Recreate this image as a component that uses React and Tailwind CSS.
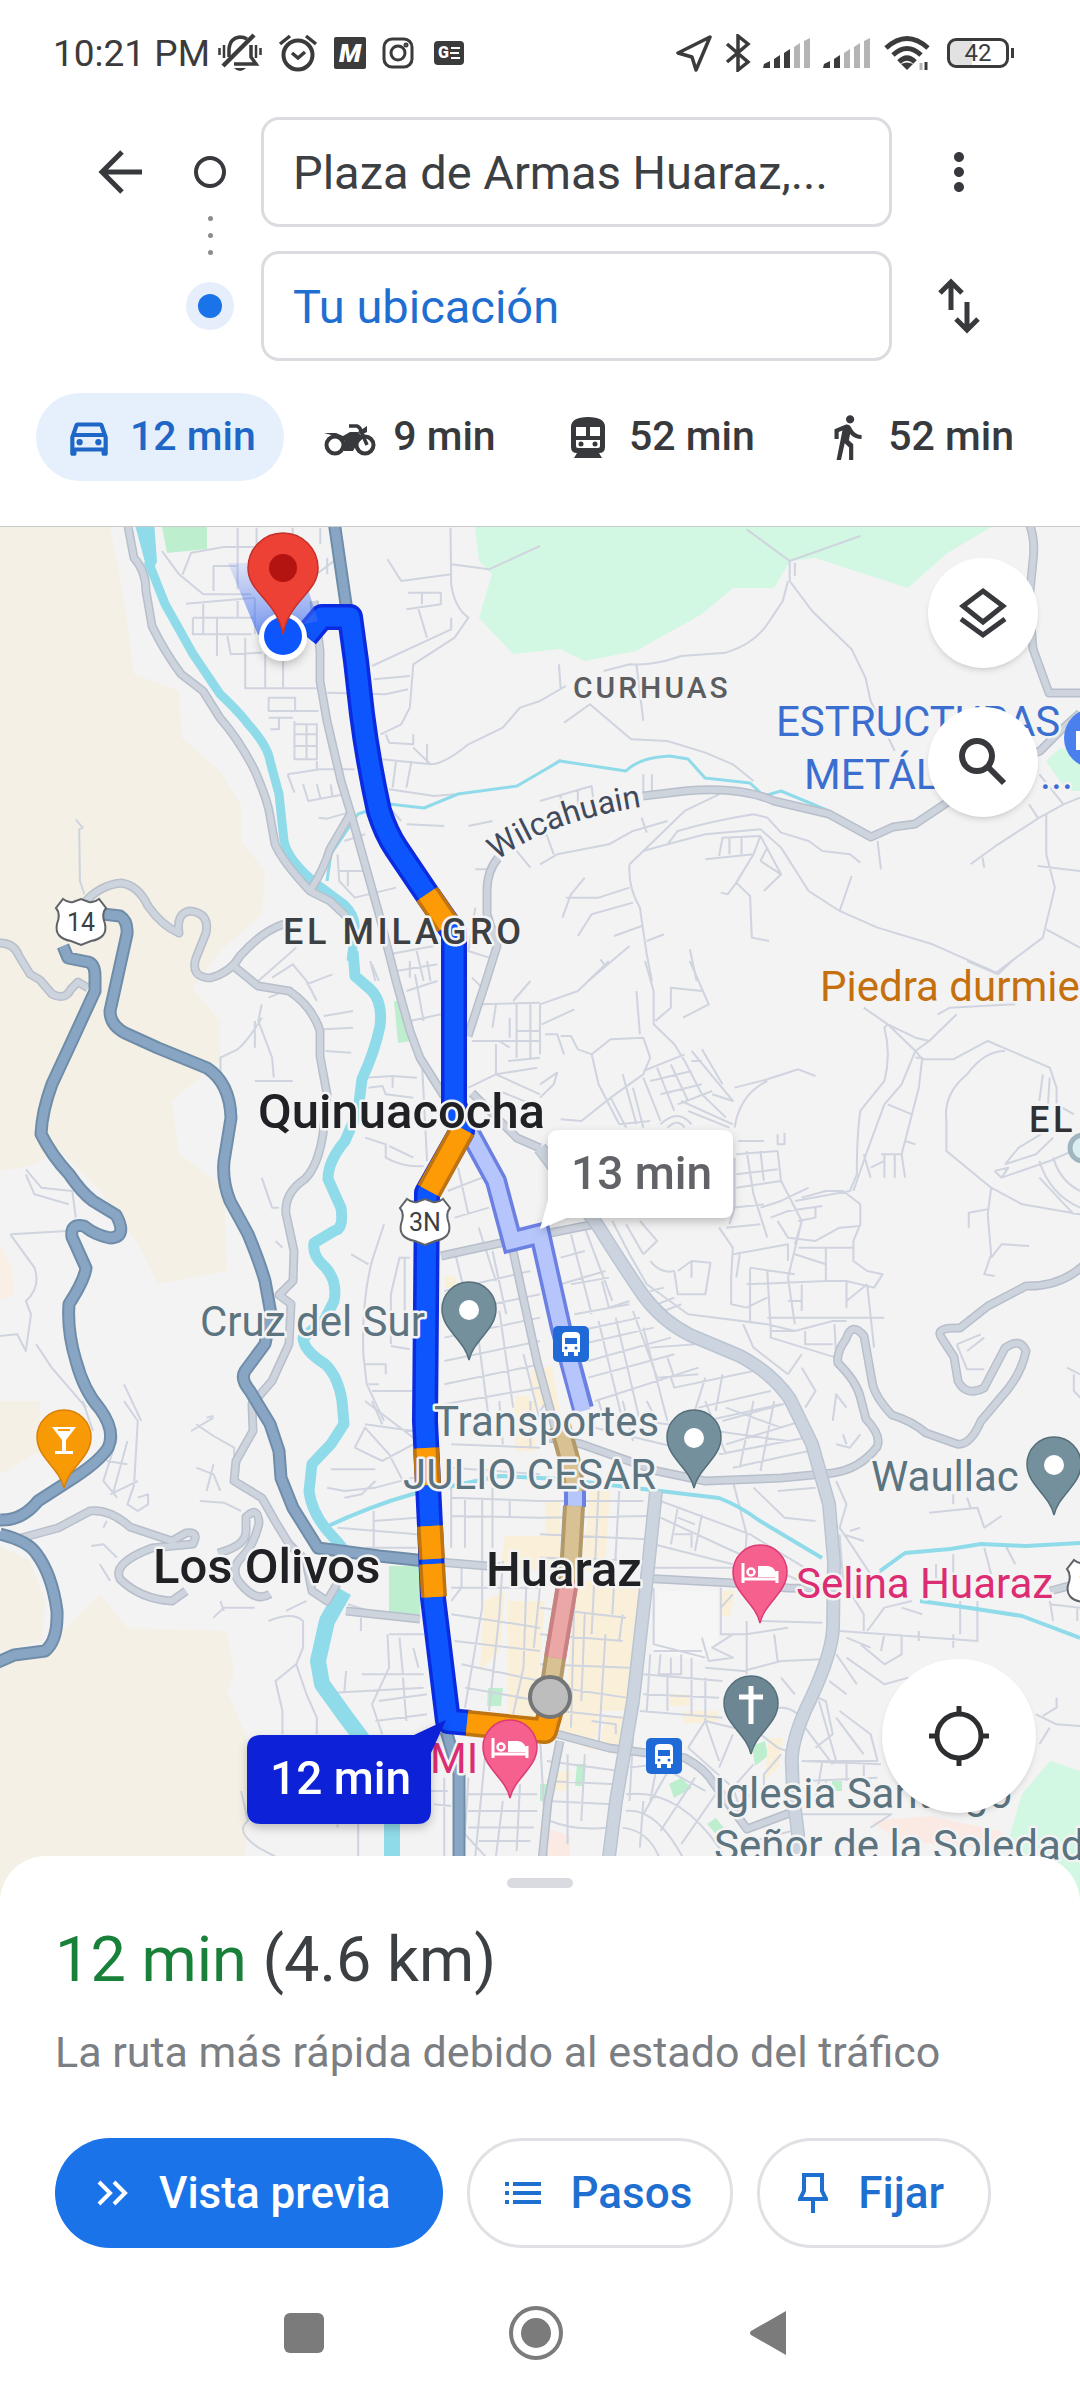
import { useState } from 'react';
import { MdOutlineDirectionsCar, MdDirectionsWalk, MdMoreVert } from 'react-icons/md';

const modes = [
  { id: 'car', time: '12 min' },
  { id: 'moto', time: '9 min' },
  { id: 'transit', time: '52 min' },
  { id: 'walk', time: '52 min' },
];

// Map labels, x/y is the start of the baseline
const labels = [
  { text: 'CURHUAS', x: 573, y: 697, cls: 'text-[30px] font-medium tracking-widest fill-[#5b5d60]' },
  { text: 'EL MILAGRO', x: 283, y: 943, cls: 'text-[36px] font-medium tracking-widest fill-[#3c4043]' },
  { text: 'EL', x: 1029, y: 1131, cls: 'text-[36px] font-medium tracking-widest fill-[#303134]' },
  { text: 'Quinuacocha', x: 258, y: 1127, cls: 'text-[49px] font-medium fill-[#202124]' },
  { text: 'Los Olivos', x: 153, y: 1582, cls: 'text-[49px] font-medium fill-[#202124]' },
  { text: 'Huaraz', x: 486, y: 1585, cls: 'text-[49px] font-medium fill-[#202124]' },
  { text: 'Cruz del Sur', x: 200, y: 1335, cls: 'text-[42px] fill-[#5b747f]' },
  { text: 'Transportes', x: 434, y: 1435, cls: 'text-[42px] fill-[#5b747f]' },
  { text: 'JULIO CESAR', x: 403, y: 1488, cls: 'text-[42px] fill-[#5b747f]' },
  { text: 'Waullac', x: 871, y: 1490, cls: 'text-[42px] fill-[#5b747f]' },
  { text: 'Iglesia Santiago', x: 714, y: 1807, cls: 'text-[42px] fill-[#5b747f]' },
  { text: 'Señor de la Soledad', x: 714, y: 1859, cls: 'text-[42px] fill-[#5b747f]' },
  { text: 'Selina Huaraz', x: 796, y: 1597, cls: 'text-[42px] fill-[#dc2d73]' },
  { text: 'MI', x: 430, y: 1772, cls: 'text-[42px] fill-[#dc2d73]' },
  { text: 'Piedra durmiente', x: 820, y: 1000, cls: 'text-[42px] fill-[#c4700f]' },
  { text: 'ESTRUCTURAS', x: 776, y: 735, cls: 'text-[42px] fill-[#3a6fd0]' },
  { text: 'METÁLICAS ...', x: 804, y: 788, cls: 'text-[42px] fill-[#3a6fd0]' },
];

const highways = [
  'M63 945L68 957L88 961Q95 963 95 975V990L72 1040L52 1083Q42 1110 41 1133Q52 1155 69 1173Q82 1192 93 1200L116 1214Q128 1236 110 1237Q95 1234 84 1225Q70 1222 72 1236L86 1267Q84 1280 69 1303Q67 1330 76 1360Q84 1390 100 1408Q116 1430 108 1447Q98 1462 69 1480L38 1500Q22 1520 0 1519',
  'M103 913L120 915Q128 920 127 933L110 1010Q110 1024 125 1032L158 1047L207 1067Q230 1082 231 1117L224 1160Q222 1180 230 1200L248 1233Q260 1262 265 1280L271 1313L265 1343L245 1370Q240 1378 250 1390L270 1423L279 1450L281 1477L293 1507L318 1547L379 1555L426 1560',
  'M0 1533Q28 1540 36 1552Q52 1573 57 1610Q58 1640 45 1650L14 1654L-4 1662',
  'M446 1730L459 1773V1880',
  'M334 520L347 610',
];

const mediumRoads = [
  'M127 520L134 557Q146 570 146 590L152 625Q164 650 181 673L203 690L220 717Q240 740 255 770Q268 800 270 815L275 843Q282 860 310 890L330 900L346 915',
  'M310 890Q324 868 330 848L351 812',
  'M314 600L320 650V680L327 720L341 780L351 813L365 863L379 913L396 980L410 1030L420 1057L444 1095',
  'M472 1092L517 1137L540 1147',
  'M498 857Q487 870 487 890V913L497 945L486 980L468 1035',
  'M643 795L685 790Q740 785 774 800L829 813L871 836L893 826L915 823L945 803L990 770L1040 750L1060 730L1080 712',
  'M1027 518Q1036 535 1033 560L1029 600L1033 648L1049 692H1082',
  'M84 902Q100 884 121 882Q138 884 148 905Q162 925 179 932Q176 912 190 910Q210 912 206 932L196 957Q190 976 210 977Q230 972 240 955Q262 930 284 923',
  'M231 963L258 985L289 990Q312 1005 320 1030L320 1055L327 1093L323 1133Q318 1165 305 1178Q284 1192 286 1213L294 1250L293 1280L279 1294L291 1303L289 1343L272 1380L252 1403L253 1430L236 1460L234 1480L262 1497L275 1520L289 1543L306 1560L312 1590L327 1600L337 1583',
  'M0 942Q14 942 19 955L30 973L40 979L52 993Q65 1000 71 988L78 981L88 987',
  'M21 1537L58 1527L90 1510Q110 1508 130 1526L172 1540L186 1532Q200 1530 193 1543L152 1547Q112 1562 120 1578Q140 1598 172 1600L186 1590',
  'M218 1552Q246 1545 246 1530V1516Q258 1504 259 1522Q254 1545 240 1558Q230 1570 240 1582Q256 1602 270 1593',
  'M1084 1264Q1060 1286 1026 1285L988 1305L960 1327Q935 1326 941 1336L954 1356L958 1380Q966 1396 984 1387L1005 1347Q1020 1336 1026 1350Q1022 1370 1008 1388L981 1420Q970 1445 957 1443L926 1432Q912 1420 892 1414Q874 1395 872 1380L864 1335Q852 1320 846 1338Q836 1352 838 1362Q856 1380 860 1395L866 1418Q882 1435 877 1446Q860 1468 833 1472L781 1477L705 1480L657 1470L581 1443L550 1437',
  'M557 1733L609 1747L685 1757Q705 1768 712 1780L747 1828L795 1810',
  'M441 1255L510 1240L600 1222',
  'M513 1250L537 1360L556 1430',
  'M426 1560L500 1566',
  'M640 1577L733 1582L788 1587L840 1588',
  'M1050 1590L1080 1582',
  'M540 1880L548 1800L560 1740',
  'M346 1610L420 1618',
];

const avenues = [
  'M540 1147L598 1225Q625 1268 643 1294Q662 1320 690 1334L740 1355Q772 1372 790 1398L812 1443L829 1503L834 1560L833 1627Q832 1655 805 1710Q790 1745 792 1765L793 1793L798 1833V1880',
  'M656 1490L647 1577L633 1700L616 1800L606 1880',
];

// Minor streets grouped by map tile, in tile units
const tiles = [
  {
    at: 'translate(0 520) scale(0.3444 0.3333)',
    d: 'M470 90L520 160L590 220H730M530 160L555 95L650 78H750M620 210V135H690M690 205V20M745 20V120M540 248L740 230M590 245V340M560 290H740M560 290V340H730M630 290V405M660 345L670 400L760 395M712 350V502H920M770 400V500M822 400V500M690 240V290M740 230V340M780 530H857V570H780ZM857 570H925M780 590H850M810 590V625H785M855 600V715H920V610H855M890 610V715M855 640H920M855 675H920M835 760L930 745H1030M835 760L855 815M880 790L895 840L1000 820M920 790L930 830M960 790L965 825M920 720V745M925 890L950 893L1010 875M1308 20L1310 190Q1320 260 1360 290L1320 350L1200 430L1190 560L1165 610L1105 640M1125 115L1165 180L1310 160M1080 435L1310 325V290M1215 265L1240 350M1185 215H1280V250L1180 265M1225 215V250M1310 130L1420 145L1568 75M1085 475L1190 465M950 515L1120 520L1185 505M1120 640L1130 665L1200 670V640M1200 680L1250 730Q1290 730 1360 670L1460 620L1510 560L1568 540M1110 715L1250 730M1140 800L1150 720M1180 800L1195 720M1240 670V730M1180 910L1290 915M1165 900L1130 860M1360 915L1430 900M1130 805L1260 825L1320 820M220 895L240 920L230 925L232 1080L245 1120M980 1000L985 1080L1030 1130L1150 1100M980 1050H1060M1000 960L1060 940M1010 1050V1095M1075 1320L1090 1380M1130 1300L1260 1275M1150 1350L1270 1330M1210 1290L1230 1380M1380 1045H1430M1380 1160L1360 1290L1420 1310M1500 990L1540 1040M750 1380L860 1280M850 20V40M930 70V20M950 110V160M905 170L970 120',
  },
  {
    at: 'translate(540 520) scale(0.3444 0.3333)',
    d: 'M600 25L725 120L930 45M725 120V180M740 125V165M720 180L705 240L660 310Q620 370 540 395L410 405Q330 435 260 430L185 450M725 180L790 270L905 385L945 470L960 540L1030 690M280 430L300 600M55 430L60 505M0 540L75 495M70 605L145 550L185 585L265 655L370 660L480 695L560 730L620 780M0 755L60 715M0 840L150 795L155 840M60 820V860M110 805V850M300 760V820M325 760V810M0 1030L50 1000L200 970L270 930L370 900M15 930L40 1000M295 890L310 935M300 990L420 870L520 820M260 1030L300 990L370 970L480 940L640 925L700 980L780 1110L870 1170L980 1220L1140 1270L1325 1355L1460 1250L1495 1100L1470 1000V880M370 970L400 930Q500 900 620 880L660 890L700 935L780 960L820 990L900 1000L930 1025M260 1030Q255 1100 290 1160L310 1300L325 1380M75 1130H170L260 1100M130 1070L90 1120L65 1190M110 1245L150 1180L270 1145M215 1245L295 1215M310 1260L360 1240M140 1380L260 1275M175 1315L190 1335M435 1285L455 1380M480 1015L620 1000M520 1005L530 950L640 945L700 1060M550 950V1000M585 950V1000M640 945L620 1000L570 1085L610 1125L615 1250L665 1260M570 1085L545 1120L525 1115M640 1020L700 1060L650 1110M660 980L640 1020M905 1065L870 1170M980 960L990 1045M1250 1030L1330 970L1450 890L1520 850L1568 830M1285 1010L1290 1040M1420 850L1445 890M1450 760L1520 850M1445 1035L1568 1050M1470 1225L1568 1280M0 950L20 940',
  },
  {
    at: 'translate(0 960) scale(0.3444 0.3333)',
    d: 'M760 170Q720 240 690 265L640 290V340M760 130L750 180L790 290L795 350M740 180V260M740 360H850M780 110L850 80M790 50L850 10L890 60L920 120M890 70L965 40M940 165L1025 150M940 205L1025 200M945 270L1020 275M75 625L120 680L210 690L220 770M75 640L100 700L200 730M30 820L195 810M30 820L100 920Q120 980 75 1020L90 1060L75 1170L50 1120L0 1125M105 1150L150 1220L250 1340M360 1270L410 1380M760 650L790 740L810 740M800 840L820 860M1020 880L1070 910M1115 790L1080 900Q1050 1020 1055 1180L1065 1270L1115 1380M1135 1150V1000L1160 890H1190M1175 890V1050M1055 1210H1120V1240M1070 1270H1100M1080 1290H1200M1135 1155L1190 1165M600 1370L620 1365M1060 350L1140 345L1210 350M1070 380L1110 375L1120 400L1200 410M1140 345V380M1060 530L1120 550L1120 590Q1170 620 1230 615M1130 555L1200 590M1225 300L1240 600M1080 10L1100 60M1190 50V0M1180 90L1270 60M1190 180L1280 160M1205 40L1230 180M1240 0L1250 60M1370 50L1400 80M1395 130L1568 125M1440 130L1430 200M1480 170V230M1490 120L1540 60M1500 130V290M1540 130V290M1370 240H1568M1450 240L1480 260M1440 250V340L1568 400M1360 380L1440 340L1560 320M1475 300L1568 290M1500 210H1568M1450 390L1568 440M1330 620L1360 760M1300 690L1400 650M1320 770L1420 740M1390 800L1440 960M1320 870L1360 1040M1430 870L1470 1060M1290 990L1540 930M1290 1060L1568 1000M1290 1130L1568 1070M1290 1200L1568 1140M1290 1270L1568 1210M1290 1330L1568 1280M1380 1060L1420 1380M1450 1050L1490 1340M1520 1180L1568 1380',
  },
  {
    at: 'translate(540 960) scale(0.3444 0.3333)',
    d: 'M0 130L110 90L200 0M0 130V280M5 190L100 145M15 220H50L70 280M60 225H90L110 265L150 280L205 235L300 230L320 290L300 340L205 410L120 480L60 475M150 280L170 370L230 490M0 370L50 335L40 370L0 410M280 90L290 220M305 0L330 90L330 190L390 250L420 300L470 400L540 470M435 0L490 130L415 170M335 180L380 140V80L470 90M205 410L250 500M240 340L280 490M270 380L300 500M300 330L420 280M300 350L350 480M340 320L390 450M380 310L430 420M320 360L440 330M350 400L470 370M400 430L500 390M440 270L560 420L500 400M470 265L530 370M440 300L470 300M410 420L560 490M430 450L550 500M230 490L320 480M350 490Q400 440 440 490M370 500Q400 470 420 500M565 380L660 355L750 325L800 345M565 500Q580 400 660 360M575 540H650M690 520V550H710V515M570 580L690 570M570 640L690 625M570 680L700 660M600 570L620 700L660 830M640 570L650 660M690 570L700 660L760 780M565 590V740L550 790M640 740L700 720L780 680M560 740L650 730M540 800L640 790M760 710L830 690H880L930 730V790L910 840V900L950 930L995 940L970 980L890 960L830 960L600 970M740 720L900 690L920 640Q920 520 930 450L1000 360Q1020 280 1000 200L1010 190L1090 270L1050 370L1000 430L950 570L910 690M670 770L720 750L820 735M690 780L720 830L800 840L870 800L930 795M750 780L800 770V740M520 800L560 860L555 950M580 880L570 950M560 880L720 850V900M720 950L760 780L740 850M750 860H910M610 920L740 940M610 920V1080M555 950V1030L600 1040M660 930L670 1110L740 1110M720 950L740 1090M760 970V1050M830 960V860M890 960V1040M720 1020H760M600 1040L660 1010M660 1070L1000 1070M950 970L970 1160M890 1020L950 970M740 880L830 910M430 1060L660 1090L740 1110L850 1080H890M590 1090L620 1160L720 1240M670 1110V1130L860 1190M770 1110V1150H850M855 1090L860 1190M720 1240L760 1180M760 1220L800 1290L770 1340M850 1380L860 1300L890 1340M320 900Q350 940 390 930M300 880L340 840L290 780M390 930L400 1000H480L495 905L440 900L400 930M440 900V950M210 780L260 880L310 970L430 1060M250 790L300 880M320 990L360 980M340 1030L390 1010M360 1050L410 1030M60 890L130 870M60 970L190 930M90 820L150 1060M130 800L210 1020M90 970L200 950M180 960L200 1040L260 1020M100 1060L260 1030M110 1110L290 1070M120 1150L330 1100M140 1200L380 1130M140 1250L390 1180M160 1320L460 1220M270 1050L340 1250L460 1240M170 1080L240 1380M220 1070L290 1380M300 1100L370 1380M320 1160L450 1150M380 1250L390 1280L620 1230M480 1250L440 1380M530 1240L510 1350M370 1190L390 1250M460 1340L670 1290M480 1380L700 1330M940 140L1010 190L1090 230L1130 240L1090 270L1110 295H1200L1300 240L1480 320L1500 380V430L1550 460M1130 240L1210 160M1155 160L1190 140L1380 130M1090 290H1110L1100 380L1080 460L1010 430M1080 460L1050 580M1060 540L1090 550M1350 270Q1290 270 1240 340Q1170 400 1180 480L1180 570L1310 680L1400 730L1568 760M940 580L960 650M1000 580V650M1030 580V650M990 580H1050L1060 650M960 620L1000 600M1310 680L1300 760L1310 880L1290 940L1320 945M1310 890L1340 850L1420 855M1245 800V755L1300 745M1350 610L1390 560L1470 510M1320 630L1360 620L1340 650L1320 630M1340 650L1480 600L1568 560M1350 610L1440 580L1490 530M1450 600Q1480 700 1568 740M1490 590Q1510 660 1568 690M1450 650L1550 760M1460 340L1450 420M1480 350L1475 430M1210 1150L1280 1120M1240 1170L1290 1130M1210 1150L1240 1225H1290M1530 1220L1568 1240M1550 1240V1290L1568 1310M1240 0L1330 40L1370 0',
  },
  {
    at: 'translate(0 1400) scale(0.3444 0.3333)',
    d: 'M555 90L620 50M570 70L620 105L680 140V170M570 200L620 220L640 270M600 270L620 190M580 300L650 305L700 330M240 0L270 90M360 0L400 60L390 240M300 240L340 110M330 270L370 120M310 180L370 190M320 280L400 240M300 240L340 290M390 250L370 310L400 330L430 310V280L400 290M265 435L300 430L340 470M290 490L320 540M310 360L300 380M620 650L650 620L740 620M640 600L650 630M830 630L890 600M780 660Q850 630 880 660L880 740L860 790L890 880L920 950V1000M860 790L800 840L820 930V1000M700 1170L720 1260Q680 1290 750 1340L800 1367M1040 1270V1367M980 1280V1270M1060 0L1200 110M1080 0L1110 70M1030 140L1060 80L1130 160L1170 240M1030 140L1110 180L1200 130M960 205H1090M950 260L1000 270L1090 260L1200 230M1060 70L1200 90M1000 290L1050 280L1090 240M1085 330V440M980 380L1210 400M1085 360L1210 350M1060 440L1210 440M1010 610L1100 640L1220 650M1048 650V690M1130 700H1230M1125 700L1130 800L1080 910L1110 1000M1160 710L1170 820M1200 740L1215 800M1050 820H1230M1005 810L1000 870M970 875L1230 860M1100 900L1240 880M1090 960L1240 940M1170 830L1180 960M1310 290L1568 300M1310 345L1568 350M1310 240V440M1350 290V440M1430 200V440M1400 290V620M1310 200L1568 220M1310 130L1568 140M1450 0L1460 130M1310 640L1568 680M1320 720L1568 750M1340 790L1568 840M1350 860L1568 900M1340 490V560L1310 600M1400 620L1350 920M1460 480L1450 640L1420 930M1530 500L1520 800L1490 940M1568 560L1550 740M1400 560H1568M1310 560H1400M1480 300V350M1540 0V140M1250 1170H1300M1260 1210L1310 1215M1290 1130V1367M1360 1130L1350 1300L1410 1367M1410 1050L1380 1367M1460 1200L1440 1367M1360 1180H1560M1360 1230H1560M1360 1280H1550M1510 1150L1500 1350M1390 1320H1540',
  },
  {
    at: 'translate(540 1400) scale(0.3444 0.3333)',
    d: 'M0 300H300M0 350L320 345M0 400L310 415M0 470L300 480M20 0L40 100M170 0L200 100M240 0L270 120M310 0L340 60M160 40L720 120M160 80L400 140M540 20L700 80M540 130L760 60M520 160L770 110M530 60L740 0M560 200L780 150M620 0L580 200M680 0L640 210M480 0L540 160M230 270L210 640M170 270L150 700M110 300L100 620M350 300L610 400L800 520M350 350L560 450L820 570M400 320L380 430M470 340L450 450M330 430L560 490M390 400H440V440M400 350L450 370M330 500H560M560 240L600 400L595 480M620 260L710 350L800 360M860 240L890 310L870 380L960 520M690 270L800 260M330 560V730L480 770M525 560V700H600L720 680M600 660V820M640 660L820 665M560 580L525 620M330 750H470M320 760L310 930M350 760L345 820H410V760M380 770V820M440 770V940M470 710L490 780L560 770L500 740L560 700M480 800L590 810L700 780L820 775M480 830V960M300 820L530 840M300 880L520 890M290 930L530 950M370 820V930M680 700L690 780M700 830L740 880M750 940Q700 900 660 940M780 1080H980L960 1000L870 930M800 1040L850 1000L830 900L780 880M840 840L890 880M860 760L920 850M890 770L1000 850L1070 830M890 710L960 740M930 730L1000 790L1050 760V700M870 690L1270 720V600M950 690L1000 620L1080 600M1100 720V690M1200 740V700M940 690V640L880 540L870 400M980 520L1030 480M880 400L940 420M900 390L930 380M1000 700L990 750M1050 620L1110 640M1130 335L1270 320L1290 380L1340 345M1200 280V310M1240 290L1250 320M1150 490V540M1200 460V530M1290 440L1310 520M1350 430L1380 490M1220 600V700M1480 600L1490 660M1560 620V660M860 130L900 140L930 100M880 100L890 130M0 620L250 650M0 700L240 720M100 580L90 980M190 700L170 1040M130 640L120 900M240 640L230 720M0 790L260 800M60 860L250 890M60 930L240 950M150 960L220 970V1000M0 1010L20 1380M20 1080L230 1110M20 1140L220 1150M20 1200L210 1210M30 1260Q100 1290 200 1280M80 1060V1330M130 1060L120 1260M270 1010L260 1200M260 1100L340 1090L480 1170M250 1180Q400 1160 520 1340L540 1380M250 1230Q340 1220 420 1380M240 1280Q320 1290 350 1380M300 1200L290 1340M340 1090L320 1200M400 1060L300 1240M450 1130L350 1290M510 1180L410 1330M520 1080L480 960L640 1000L690 1040L740 1060M430 1040L560 1160L590 1250M480 960L430 1040M560 1000L520 1100M620 1090L560 1160L640 1200M700 1060L650 1120V1200M760 1080L990 1090M770 1140L980 1130M820 1080L800 1200M890 1080V1140M940 1090V1140M760 1240L1020 1240L960 1280M830 1140L850 1200M770 980L850 1090M810 900L860 1080M860 950L940 1060M1440 940L1500 970L1568 975M1450 1030L1480 980M1500 890V920L1460 945M600 1290L730 1240M620 1320L730 1290M0 30L20 1M1480 610L1568 620M1490 560L1568 545',
  },
];

function Motorcycle() {
  return (
    <svg viewBox="0 0 54 42" className="h-[42px] w-[54px]" fill="none" stroke="currentColor" strokeWidth="4">
      <circle cx="12" cy="29" r="8.500" />
      <circle cx="42" cy="29" r="8.500" />
      <path d="M26 10H34Q37 11 38 15L44 29" strokeWidth="3.500" />
      <path d="M35 16L44 10V16L38 19Z" fill="currentColor" stroke="none" />
      <path d="M1 17H13L20 20L27 16H35L40 22L34 28L30 35H21L18 31L22 25L12 20Z" fill="currentColor" stroke="none" />
    </svg>
  );
}

function Train() {
  return (
    <svg viewBox="0 0 50 50" className="size-[50px]" fill="currentColor">
      <path
        fillRule="evenodd"
        d="M8 15Q8 5 25 5T42 15V35Q42 41 36 41L39 46H11L14 41Q8 41 8 35ZM13 15V24H23V15ZM27 15V24H37V15ZM13 28V34Q13 36 15 36H35Q37 36 37 34V28Z"
      />
      <circle cx="18" cy="32" r="2.500" />
      <circle cx="32" cy="32" r="2.500" />
    </svg>
  );
}

function ModeIcon({ id }) {
  if (id === 'car') return <MdOutlineDirectionsCar className="size-[50px]" />;
  if (id === 'moto') return <Motorcycle />;
  if (id === 'transit') return <Train />;
  return <MdDirectionsWalk className="size-[50px]" />;
}

function Signal({ strong }) {
  return (
    <svg viewBox="0 0 48 32" className="h-8 w-12" fill="#b4b4b4">
      <path d="M0 31L1 27L7 24V31Z" fill="#3b3b3b" />
      <path d="M11 31V22L17 18V31Z" fill="#3b3b3b" />
      <path d="M21 31V16L27 12V31Z" fill={strong ? '#3b3b3b' : '#b4b4b4'} />
      <path d="M31 31V10L37 6V31Z" />
      <path d="M41 31V4L47 1V31Z" />
    </svg>
  );
}

function StatusBar() {
  return (
    <div className="flex h-[106px] items-center justify-between pl-[53px] pr-[66px] text-[#3b3b3b]">
      <div className="flex items-center gap-4">
        <span className="text-[37px] leading-none">10:21 PM</span>
        <svg viewBox="0 0 44 40" className="-ml-2 h-10 w-11" fill="none" stroke="currentColor" strokeWidth="3.5">
          <path d="M11 24V16Q12 5 22 4Q26 4 29 6M33 12V24L38 31H16" />
          <path d="M5 33L36 2" strokeWidth="4.5" />
          <path d="M16 35H28Q22 41 16 35Z" fill="currentColor" stroke="none" />
          <path d="M1.500 15V22M6 12V25M38 12V25M42.500 15V22" strokeWidth="2.500" />
        </svg>
        <svg viewBox="0 0 40 40" className="size-10" fill="none" stroke="currentColor" strokeWidth="4">
          <circle cx="20" cy="22" r="14.500" />
          <path d="M2 11L12 3M38 11L28 3" strokeWidth="3.500" />
          <path d="M14 20L20 25L27 19" strokeWidth="3.500" />
        </svg>
        <span className="flex size-8 items-center justify-center rounded-xs bg-[#3b3b3b] text-[26px] leading-none font-black text-white italic">M</span>
        <svg viewBox="0 0 32 32" className="size-8" fill="none" stroke="currentColor" strokeWidth="3">
          <rect x="2" y="2" width="28" height="28" rx="8" />
          <circle cx="16" cy="16" r="7" />
          <circle cx="24" cy="8" r="1" />
        </svg>
        <span className="ml-1 flex h-6 w-[30px] items-center justify-center gap-px rounded-sm bg-[#3b3b3b] text-[16px] leading-none font-black text-white">
          G
          <svg viewBox="0 0 10 12" className="h-3 w-2.5" stroke="#fff" strokeWidth="2">
            <path d="M1 1H10M0 6H9M1 11H10" />
          </svg>
        </span>
      </div>
      <div className="flex items-center gap-3">
        <svg viewBox="0 0 38 38" className="size-[38px]" fill="none" stroke="currentColor" strokeWidth="3.5" strokeLinejoin="round">
          <path d="M35 3L3 19L17 23L21 36Z" />
        </svg>
        <svg viewBox="0 0 26 38" className="h-[38px] w-[26px]" fill="none" stroke="currentColor" strokeWidth="3.5">
          <path d="M2 10L23 28L13 36V2L23 10L2 28" />
        </svg>
        <Signal strong />
        <Signal />
        <svg viewBox="0 0 48 38" className="h-[38px] w-12" fill="none" stroke="currentColor" strokeWidth="5">
          <path d="M3 14Q24 -5 45 14" />
          <path d="M10 21Q24 8 38 21" />
          <path d="M16 28Q24 20 32 28" />
          <path d="M24 36L18 30Q24 27 30 30Z" fill="currentColor" stroke="none" />
          <path d="M38 29V36" stroke="#b4b4b4" strokeWidth="3" />
          <path d="M43 28V36" strokeWidth="3" />
        </svg>
        <div className="flex items-center gap-0.5 pl-1">
          <span className="flex h-[30px] w-[62px] items-center justify-center rounded-[9px] border-3 border-[#3b3b3b] bg-linear-to-r from-[#e2e2e2] from-40% to-white to-40% text-[24px] leading-none">
            42
          </span>
          <span className="h-2.5 w-[3px] bg-[#3b3b3b]" />
        </div>
      </div>
    </div>
  );
}

function SearchHeader() {
  return (
    <header className="flex gap-6 pt-[11px] pr-[78px] pl-[83px]">
      <button type="button" aria-label="Atrás" className="flex h-[110px] w-[76px] items-center justify-center">
        <svg viewBox="0 0 46 46" className="size-[46px]" fill="none" stroke="#37393c" strokeWidth="5">
          <path d="M44 23H5M24 3L4 23L24 43" />
        </svg>
      </button>
      <div className="flex w-[54px] flex-col items-center justify-between py-[31px]">
        <span className="mt-2 size-8 rounded-full border-4 border-[#37393c]" />
        <span className="flex flex-col gap-3">
          <span className="size-[5px] rounded-full bg-[#8a8d91]" />
          <span className="size-[5px] rounded-full bg-[#8a8d91]" />
          <span className="size-[5px] rounded-full bg-[#8a8d91]" />
        </span>
        <span className="flex size-12 items-center justify-center rounded-full bg-[#e6eefc]">
          <span className="size-6 rounded-full bg-[#1a73e8]" />
        </span>
      </div>
      <div className="flex min-w-0 flex-1 flex-col gap-6">
        <input
          type="text"
          aria-label="Origen"
          defaultValue="Plaza de Armas Huaraz,..."
          className="h-[110px] w-full rounded-[18px] border-3 border-[#dadce0] px-[29px] text-[47px] text-[#3c4043] outline-none"
        />
        <input
          type="text"
          aria-label="Destino"
          defaultValue="Tu ubicación"
          className="h-[110px] w-full rounded-[18px] border-3 border-[#dadce0] px-[29px] text-[47px] text-[#1f6fd0] outline-none"
        />
      </div>
      <div className="flex w-[86px] flex-col gap-6">
        <button type="button" aria-label="Más opciones" className="flex h-[110px] items-center justify-center">
          <MdMoreVert className="size-[60px] text-[#37393c]" />
        </button>
        <button type="button" aria-label="Invertir ruta" className="flex h-[110px] items-center justify-center">
          <svg viewBox="0 0 46 56" className="h-14 w-[46px]" fill="none" stroke="#37393c" strokeWidth="5">
            <path d="M15 32V4M4 15L15 4L26 15M31 24V52M20 41L31 52L42 41" />
          </svg>
        </button>
      </div>
    </header>
  );
}

function ModeTabs() {
  const [active, setActive] = useState('car');

  return (
    <nav className="flex items-center justify-between pt-8 pr-[38px] pb-[45px] pl-9">
      {modes.map((mode) => (
        <button
          key={mode.id}
          type="button"
          onClick={() => setActive(mode.id)}
          className={`flex h-[88px] items-center gap-4 rounded-full px-7 text-[41px] font-medium ${
            active === mode.id ? 'bg-[#e6effc] text-[#1e67c6]' : 'text-[#37393c]'
          }`}
        >
          <ModeIcon id={mode.id} />
          {mode.time}
        </button>
      ))}
    </nav>
  );
}

function Pin({ x, y, color, edge, children }) {
  return (
    <g transform={`translate(${x} ${y})`}>
      <path d="M0 0C-5 -21 -27 -30 -27 -51A27 27 0 0 1 27 -51C27 -30 5 -21 0 0Z" fill={color} stroke={edge} strokeWidth="1.500" />
      {children}
    </g>
  );
}

function Bed() {
  return (
    <g fill="none" stroke="#fff" strokeWidth="3">
      <path d="M-17 -60V-40M17 -52V-40M-17 -44H17" />
      <circle cx="-9" cy="-51" r="3.500" strokeWidth="2.500" />
      <path d="M-2 -57H8Q16 -56 17 -46H-2Z" fill="#fff" stroke="none" />
    </g>
  );
}

function Shield({ x, y, text }) {
  return (
    <g transform={`translate(${x} ${y})`}>
      <path
        d="M-18 -23Q-13 -19 -8 -20L0 -23L8 -20Q13 -19 18 -23L25 -14Q20 -8 24 2Q27 16 10 19L0 23L-10 19Q-27 16 -24 2Q-20 -8 -25 -14Z"
        fill="#fff"
        stroke="#5f6368"
        strokeWidth="2"
      />
      <text textAnchor="middle" y="9" className="fill-[#3c4043] text-[25px]">
        {text}
      </text>
    </g>
  );
}

function BusStop({ x, y }) {
  return (
    <g transform={`translate(${x} ${y})`}>
      <rect x="-18" y="-18" width="36" height="36" rx="5" fill="#1f6ad6" />
      <path d="M-9 -8Q-9 -12 -4 -12H4Q9 -12 9 -8V8H7V12H3V8H-3V12H-7V8H-9Z" fill="#fff" />
      <path d="M-6 -6H6V0H-6Z" fill="#1f6ad6" />
      <circle cx="-5" cy="4" r="1.500" fill="#1f6ad6" />
      <circle cx="5" cy="4" r="1.500" fill="#1f6ad6" />
    </g>
  );
}

function MapCanvas() {
  return (
    <svg viewBox="0 526 1080 1374" className="block h-auto w-full bg-[#f4f3f4]" fill="none">
      <defs>
        <linearGradient id="beam" x1="0" y1="1" x2="0" y2="0">
          <stop offset="0" stopColor="#3f6df0" stopOpacity="0.7" />
          <stop offset="1" stopColor="#3f6df0" stopOpacity="0.12" />
        </linearGradient>
        <filter id="lift" x="-20%" y="-20%" width="140%" height="160%">
          <feDropShadow dx="0" dy="4" stdDeviation="5" floodOpacity="0.22" />
        </filter>
      </defs>

      {/* Terrain */}
      <g fill="#f4f0e5">
        <path d="M0 526H110L119 570L127 620L134 673L179 690L182 737L220 770L241 803V840L265 870L262 913L220 950L193 987L220 1020V1060L172 1100L179 1153L224 1187L227 1270L158 1283L138 1243L100 1190L60 1150L30 1165L0 1170Z" />
        <path d="M0 1400H40V1450L0 1473ZM0 1545L30 1560L45 1600L42 1640L0 1650Z" />
        <path d="M0 1667L62 1630L100 1593L127 1627L227 1630L234 1673L227 1690L248 1740V1823L241 1900H0Z" />
      </g>
      <path d="M0 1245L12 1265L14 1295L0 1298Z" fill="#f9efe4" />
      <g fill="#d2f7e2">
        <path d="M475 526L479 560L492 573L479 617L513 653L560 648L585 660L636 650L702 613L733 587H774L790 560L815 557L908 587L946 553L991 526Z" />
        <path d="M1046 760L1060 747L1080 753V790H1067Z" />
        <path d="M1050 1760L1080 1770V1900H1060L1008 1840L1022 1793Z" />
      </g>
      <path
        d="M162 526H207V548L167 552ZM394 1000H401L410 1040L398 1042ZM389 1565H422L420 1613H389ZM488 1687H503L501 1705H487ZM577 1763H586L584 1785H575ZM540 1783H550V1800H540ZM669 1783L681 1777L692 1787L674 1797ZM752 1745L765 1740L768 1755L755 1765ZM707 1823L716 1817L724 1827L716 1833ZM832 1780H842V1790H832Z"
        fill="#bdefcf"
      />
      <g fill="#faf0da">
        <path d="M505 1535H550V1570L500 1568ZM484 1600L505 1590L500 1650L480 1670ZM508 1600H545L535 1720L508 1715ZM545 1500H560V1560H545ZM590 1490H610L605 1570H582ZM575 1580H640L625 1710H565ZM566 1700H600L595 1750L557 1735ZM575 1680H625L622 1700H572ZM605 1715H624L620 1745H600ZM554 1770H572L568 1790H552Z" />
        <path d="M445 1275H455L458 1287H445ZM530 1370L552 1365L560 1410L535 1405ZM515 1395L530 1395V1420H513ZM722 1590H735L730 1615H722ZM670 1693H690V1705H670ZM683 1710H718V1722H683ZM768 1737H783L779 1765L765 1780ZM515 1400H535V1450H515Z" />
      </g>
      <path d="M540 1825L570 1835V1880H540ZM870 1820L930 1815L1000 1830L1010 1850L900 1840Z" fill="#fbe9e4" />
      <path d="M658 1590H718V1640L700 1660L652 1650Z" fill="#f7f6f7" />

      {/* Streets */}
      <g stroke="#cfd4df" strokeLinejoin="round">
        {tiles.map((tile) => (
          <path key={tile.at} transform={tile.at} d={tile.d} strokeWidth="6" />
        ))}
      </g>

      {/* Water */}
      <g stroke="#8fdbe9" strokeLinejoin="round">
        <path d="M136 520H152L155 560L150 572Z" fill="#8fdbe9" strokeWidth="4" />
        <path d="M148 560L165 603L193 653L220 693Q240 712 248 723Q268 745 270 760L279 793L284 840Q288 860 317 883L344 903Q357 915 355 930L351 960" strokeWidth="9" />
        <path d="M353 950L355 975L370 988Q383 1000 380 1025Q375 1050 362 1078L358 1110L345 1140Q328 1160 328 1178L341 1207Q344 1228 334 1230L314 1242Q312 1255 325 1266Q338 1280 334 1300L325 1318L303 1337Q304 1350 325 1363Q338 1375 342 1400L344 1423L331 1443L312 1463L309 1490Q312 1515 334 1537L348 1553" strokeWidth="11" />
        <path d="M344 1590L327 1620L318 1660L322 1683L345 1715L375 1755L392 1823V1880" strokeWidth="16" />
        <path d="M327 880L331 853L358 813L389 803L424 807L458 793L517 785L560 760L626 770Q640 756 670 755L688 758L705 777L750 782L764 795L781 790L829 810" strokeWidth="3" />
        <path d="M324 1527Q370 1505 413 1493" strokeWidth="4" />
        <path d="M413 1493L500 1475L560 1478L660 1490L719 1497Q740 1505 760 1520L822 1557M880 1570L905 1552L950 1548L981 1543L1026 1545L1080 1542M920 1600L970 1607L1022 1615L1080 1637" strokeWidth="4" />
      </g>

      {/* Roads */}
      <g strokeLinejoin="round">
        {mediumRoads.map((d) => (
          <path key={d} d={d} stroke="#b7bfcb" strokeWidth="9" />
        ))}
        {mediumRoads.map((d) => (
          <path key={d} d={d} stroke="#ced4dd" strokeWidth="6" />
        ))}
        {avenues.map((d) => (
          <path key={d} d={d} stroke="#bac5d1" strokeWidth="14" />
        ))}
        {avenues.map((d) => (
          <path key={d} d={d} stroke="#ccd5df" strokeWidth="11" />
        ))}
        {highways.map((d) => (
          <path key={d} d={d} stroke="#6f8ca8" strokeWidth="13" />
        ))}
        {highways.map((d) => (
          <path key={d} d={d} stroke="#89a5c4" strokeWidth="9" />
        ))}
      </g>

      {/* Alternative route */}
      <g strokeLinejoin="miter">
        <path d="M466 1125L496 1180L512 1240L540 1233L561 1327L583 1408" stroke="#6b80e2" strokeWidth="22" />
        <path d="M466 1125L496 1180L512 1240L540 1233L561 1327L583 1410" stroke="#b6c5fb" strokeWidth="15" />
        <path d="M560 1425L571 1465L575 1492" stroke="#b39a68" strokeWidth="22" />
        <path d="M560 1425L571 1465L575 1492" stroke="#d8c193" strokeWidth="14" />
        <path d="M575 1490V1506" stroke="#6b80e2" strokeWidth="22" />
        <path d="M575 1490V1506" stroke="#b6c5fb" strokeWidth="14" />
        <path d="M574 1505L571 1557L566 1590L555 1657L550 1690" stroke="#b39a68" strokeWidth="22" />
        <path d="M574 1505L571 1557L566 1590L555 1657L550 1690" stroke="#d8c193" strokeWidth="14" />
        <path d="M568 1580L555 1657" stroke="#c98183" strokeWidth="22" />
        <path d="M568 1580L555 1657" stroke="#eba6a6" strokeWidth="14" />
      </g>

      {/* Main route */}
      <g strokeLinejoin="round">
        <path d="M306 635L322 616H350L356 660L362 713Q368 760 379 810Q386 832 396 847L427 893L454 932V1103L462 1130L427 1192L425 1420L430 1525L433 1597L448 1720L470 1722" stroke="#0a2be0" strokeWidth="26" />
        <path d="M306 635L322 616H350L356 660L362 713Q368 760 379 810Q386 832 396 847L427 893L454 932V1103L462 1130L427 1192L425 1420L430 1525L433 1597L448 1720L470 1722" stroke="#0d55fd" strokeWidth="19" />
        <path d="M427 893L448 924M463 1128L429 1190M426 1447L428 1484M430 1525L432 1558M432 1563L434 1596M467 1722L545 1730L552 1705" stroke="#bf7410" strokeWidth="26" />
        <path d="M427 893L448 924M463 1128L429 1190M426 1447L428 1484M430 1525L432 1558M432 1563L434 1596M467 1722L545 1730L552 1705" stroke="#fd9b06" strokeWidth="19" />
      </g>
      <circle cx="550" cy="1696" r="20" fill="#bdbdbd" stroke="#757677" strokeWidth="4" />

      {/* Current location and destination pin */}
      <path d="M258 634L228 562H300L318 620Z" fill="url(#beam)" />
      <circle cx="283" cy="636" r="24" fill="#fff" filter="url(#lift)" />
      <circle cx="283" cy="635" r="19" fill="#0d55fd" />
      <path d="M283 633C276 598 248 592 248 567A35 35 0 0 1 318 567C318 592 290 598 283 633Z" fill="#ee4135" stroke="#c4302a" strokeWidth="1.500" />
      <circle cx="283" cy="567" r="14" fill="#b31412" />

      {/* Labels */}
      <path id="wilcahuain" d="M497 860Q550 818 655 804" />
      <g stroke="#f4f3f4" strokeWidth="5" strokeLinejoin="round" className="[paint-order:stroke]">
        {labels.map((label) => (
          <text key={label.text} x={label.x} y={label.y} className={label.cls}>
            {label.text}
          </text>
        ))}
        <text className="fill-[#3f4a5c] text-[32px]">
          <textPath href="#wilcahuain">Wilcahuain</textPath>
        </text>
      </g>

      {/* Places */}
      <Pin x={469} y={1359} color="#74909c" edge="#546e7a">
        <circle cy="-50" r="10" fill="#fff" />
      </Pin>
      <Pin x={694} y={1487} color="#74909c" edge="#546e7a">
        <circle cy="-50" r="10" fill="#fff" />
      </Pin>
      <Pin x={1054} y={1514} color="#74909c" edge="#546e7a">
        <circle cy="-50" r="10" fill="#fff" />
      </Pin>
      <Pin x={751} y={1753} color="#6c8793" edge="#546e7a">
        <path d="M0 -68V-30M-12 -57H12" stroke="#fff" strokeWidth="5" />
      </Pin>
      <Pin x={760} y={1622} color="#f5608f" edge="#dc3a72">
        <Bed />
      </Pin>
      <Pin x={510} y={1797} color="#f5608f" edge="#dc3a72">
        <Bed />
      </Pin>
      <Pin x={64} y={1487} color="#f79a06" edge="#d98008">
        <path d="M-12 -61H12L2 -48V-37H9V-34H-9V-37H-2V-48Z" fill="#fff" />
        <path d="M-6 -58H6" stroke="#f79a06" strokeWidth="2" />
      </Pin>
      <circle cx="1094" cy="737" r="30" fill="#4a7fee" />
      <path d="M1076 730H1090V749H1076Z" fill="#fff" />
      <circle cx="1083" cy="1147" r="13" fill="#d9eeee" stroke="#9fb6c1" strokeWidth="5" />
      <Shield x={81} y={921} text="14" />
      <Shield x={425} y={1221} text="3N" />
      <Shield x={1092} y={1582} text="14" />
      <BusStop x={571} y={1343} />
      <BusStop x={664} y={1755} />

      {/* Route time callouts */}
      <g filter="url(#lift)">
        <path d="M560 1129H722Q733 1129 733 1140V1206Q733 1217 722 1217H566L540 1228L548 1200V1140Q548 1129 560 1129Z" fill="#fff" />
        <text x="571" y="1188" className="fill-[#626467] text-[46px] font-medium">
          13 min
        </text>
      </g>
      <g filter="url(#lift)">
        <path d="M261 1734H414L446 1719L431 1752V1809Q431 1823 417 1823H261Q247 1823 247 1809V1748Q247 1734 261 1734Z" fill="#0b20d6" />
        <text x="270" y="1793" className="fill-white text-[46px] font-medium">
          12 min
        </text>
      </g>
    </svg>
  );
}

function MapView() {
  return (
    <main className="relative border-t border-[#c9c9c9]">
      <MapCanvas />
      <div className="absolute top-[31px] right-[42px] flex flex-col gap-[39px]">
        <button type="button" aria-label="Capas" className="flex size-[110px] items-center justify-center rounded-full bg-white shadow-md">
          <svg viewBox="0 0 48 52" className="h-[52px] w-12" fill="none" stroke="#37393c" strokeWidth="5">
            <path d="M24 4L44 19L24 35L4 19Z" />
            <path d="M2 32L24 48L46 32" />
          </svg>
        </button>
        <button type="button" aria-label="Buscar" className="flex size-[110px] items-center justify-center rounded-full bg-white shadow-md">
          <svg viewBox="0 0 48 48" className="size-12" fill="none" stroke="#37393c" strokeWidth="6">
            <circle cx="18" cy="18" r="15" />
            <path d="M29 29L45 45" />
          </svg>
        </button>
      </div>
      <button type="button" aria-label="Mi ubicación" className="absolute right-[44px] bottom-[88px] flex size-[154px] items-center justify-center rounded-full bg-white shadow-md">
        <svg viewBox="0 0 60 60" className="size-[60px]" fill="none" stroke="#2c2e30" strokeWidth="5">
          <circle cx="30" cy="30" r="22" />
          <path d="M30 0V9M30 51V60M0 30H9M51 30H60" />
        </svg>
      </button>
    </main>
  );
}

function RouteSheet() {
  return (
    <section className="relative -mt-[45px] rounded-t-[46px] bg-white px-[55px] pt-[22px]">
      <div className="mx-auto h-2.5 w-[66px] rounded-full bg-[#dadbe0]" />
      <h1 className="pt-[34px] text-[63px] leading-[76px] text-[#3c4043]">
        <span className="text-[#188038]">12 min</span> (4.6 km)
      </h1>
      <p className="pt-[26px] text-[43px] leading-[56px] text-[#7b7e82]">
        La ruta más rápida debido al estado del tráfico
      </p>
      <div className="flex gap-6 pt-[58px] text-[44px] font-medium text-[#1f6fd0]">
        <button type="button" className="flex h-[110px] items-center gap-[30px] rounded-full bg-[#1a73e8] pr-[52px] pl-[42px] text-white">
          <svg viewBox="0 0 32 26" className="h-[26px] w-8" fill="none" stroke="currentColor" strokeWidth="4">
            <path d="M2 2L13 13L2 24M17 2L28 13L17 24" />
          </svg>
          Vista previa
        </button>
        <button type="button" className="flex h-[110px] items-center gap-[30px] rounded-full border-3 border-[#dfe1e5] pr-[38px] pl-[35px]">
          <svg viewBox="0 0 36 24" className="h-6 w-9" fill="none" stroke="currentColor" strokeWidth="4">
            <path d="M8 3H36M8 12H36M8 21H36M0 3H4M0 12H4M0 21H4" />
          </svg>
          Pasos
        </button>
        <button type="button" className="flex h-[110px] items-center gap-[30px] rounded-full border-3 border-[#dfe1e5] pr-[44px] pl-[38px]">
          <svg viewBox="0 0 30 42" className="h-[42px] w-[30px]" fill="none" stroke="currentColor" strokeWidth="4">
            <path d="M6 3H24V19L28 27H2L6 19ZM15 27V41" />
          </svg>
          Fijar
        </button>
      </div>
    </section>
  );
}

function NavigationBar() {
  return (
    <footer className="flex items-center justify-center gap-[176px] pt-[56px] pr-2 pb-[40px]">
      <button type="button" aria-label="Recientes" className="flex size-[58px] items-center justify-center">
        <span className="size-10 rounded-md bg-[#7b7b7b]" />
      </button>
      <button type="button" aria-label="Inicio" className="flex size-[54px] items-center justify-center rounded-full border-4 border-[#7b7b7b]">
        <span className="size-[30px] rounded-full bg-[#7b7b7b]" />
      </button>
      <button type="button" aria-label="Volver" className="flex size-[58px] items-center justify-center">
        <svg viewBox="0 0 38 46" className="h-[46px] w-[38px]" fill="#7b7b7b">
          <path d="M37 1V45L2 25Q0 23 2 21Z" />
        </svg>
      </button>
    </footer>
  );
}

export default function App() {
  return (
    <div className="w-full overflow-hidden bg-white font-['Roboto','Liberation_Sans',sans-serif]">
      <StatusBar />
      <SearchHeader />
      <ModeTabs />
      <MapView />
      <RouteSheet />
      <NavigationBar />
    </div>
  );
}
